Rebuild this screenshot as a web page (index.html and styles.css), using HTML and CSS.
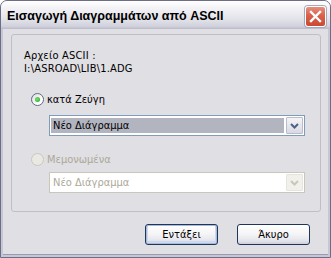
FILE: index.html
```html
<!DOCTYPE html>
<html>

<head>
    <meta charset="utf-8">
    <title>Εισαγωγή Διαγραμμάτων από ASCII</title>
    <link rel="stylesheet" href="styles.css">
</head>

<body>
    <div class="window">
        <div class="titlebar">
            <span class="title">Εισαγωγή Διαγραμμάτων από ASCII</span>
            <span class="close">
                <svg width="13" height="13" viewBox="0 0 13 13">
                    <path d="M2 2 L11 11 M11 2 L2 11" stroke="#fff" stroke-width="2.4" stroke-linecap="square" />
                </svg>
            </span>
        </div>

        <div class="client">
            <div class="group">
                <div class="label">Αρχείο ASCII :</div>
                <div class="label">I:\ASROAD\LIB\1.ADG</div>

                <div class="radio">
                    <span class="circle checked"></span>
                    <span>κατά Ζεύγη</span>
                </div>
                <div class="combo">
                    <span class="value selected">Νέο Διάγραμμα</span>
                    <span class="arrow">
                        <svg width="9" height="6" viewBox="0 0 9 6">
                            <path d="M1 1 L4.5 4.5 L8 1" fill="none" stroke="#4d6185" stroke-width="2" />
                        </svg>
                    </span>
                </div>

                <div class="radio disabled">
                    <span class="circle"></span>
                    <span>Μεμονωμένα</span>
                </div>
                <div class="combo disabled">
                    <span class="value">Νέο Διάγραμμα</span>
                    <span class="arrow">
                        <svg width="9" height="6" viewBox="0 0 9 6">
                            <path d="M1 1 L4.5 4.5 L8 1" fill="none" stroke="#c9c7ba" stroke-width="2" />
                        </svg>
                    </span>
                </div>
            </div>

            <div class="buttons">
                <div class="btn default">Εντάξει</div>
                <div class="btn">Άκυρο</div>
            </div>
        </div>
    </div>
</body>

</html>
```

FILE: styles.css
```css
body {
    margin: 0;
    font-family: "DejaVu Sans Condensed", "DejaVu Sans", sans-serif;
    font-size: 11px;
    color: #000;
    background: #fff;
}

.window {
    width: 331px;
    height: 258px;
    box-sizing: border-box;
    display: flex;
    flex-direction: column;
    border: 1px solid #6d6d86;
    border-radius: 7px 7px 0 0;
    background: #c6c6d4;
    overflow: hidden;
}

.titlebar {
    height: 28px;
    flex: none;
    display: flex;
    align-items: center;
    padding: 0 4px 0 6px;
    background: linear-gradient(#ffffff 0%, #f1f1f5 30%, #e2e2ea 65%, #d2d2dd 90%, #b9b9c9 100%);
}

.title {
    flex: 1;
    font-family: "Liberation Sans", sans-serif;
    font-weight: bold;
    font-size: 12.5px;
    color: #000;
    padding-top: 2px;
}

.close {
    width: 19px;
    height: 19px;
    display: flex;
    justify-content: center;
    align-items: center;
    border: 1px solid #fff;
    border-radius: 3px;
    background: linear-gradient(#e58f7f 0%, #d9604a 45%, #c94a35 100%);
    box-shadow: 0 0 0 1px #a8a8bb;
    margin-top: 2px;
}

.client {
    flex: 1;
    display: flex;
    flex-direction: column;
    margin: 0 2px 2px 2px;
    border-bottom: 1px solid #9a9ab0;
    background: #e0dfe3;
    padding: 5px 7px 0 8px;
}

.group {
    height: 178px;
    box-sizing: border-box;
    border: 1px solid #c0bfc8;
    border-radius: 3px;
    padding: 14px 12px 0 12px;
    display: flex;
    flex-direction: column;
}

.label {
    line-height: 13px;
    letter-spacing: 0.2px;
}

.radio {
    display: flex;
    align-items: center;
    gap: 3px;
    margin: 17px 0 0 7px;
    height: 14px;
}

.radio.disabled {
    color: #aca899;
    margin-top: 16px;
}

.circle {
    width: 11px;
    height: 11px;
    border: 1px solid #5c6b88;
    border-radius: 50%;
    background: linear-gradient(135deg, #dcdcdc, #fff 70%);
    display: flex;
    justify-content: center;
    align-items: center;
}

.circle.checked:after {
    content: "";
    width: 5px;
    height: 5px;
    border-radius: 50%;
    background: radial-gradient(circle at 40% 40%, #7be06b, #21a121);
}

.radio.disabled .circle {
    border-color: #cac8bb;
    background: #e9e8e3;
}

.combo {
    width: 256px;
    height: 21px;
    box-sizing: border-box;
    margin: 9px 0 0 25px;
    display: flex;
    border: 1px solid #7f9db9;
    background: #fff;
    padding: 1px;
}

.combo.disabled {
    border-color: #c9c7ba;
    margin-top: 6px;
    color: #aca899;
}

.value {
    flex: 1;
    display: flex;
    align-items: center;
    padding-left: 2px;
}

.value.selected {
    background: #b2b4bf;
    margin: 1px 2px 1px 0;
}

.arrow {
    width: 15px;
    display: flex;
    justify-content: center;
    align-items: center;
    border: 1px solid #b9bccc;
    border-radius: 1px;
    background: linear-gradient(#f4f4f8, #d8d9e3);
}

.combo.disabled .arrow {
    border-color: #e5e4dd;
    background: #f1f0ea;
}

.buttons {
    display: flex;
    justify-content: flex-end;
    gap: 19px;
    padding: 12px 11px 0 0;
}

.btn {
    width: 73px;
    height: 21px;
    box-sizing: border-box;
    display: flex;
    justify-content: center;
    align-items: center;
    border: 1px solid #1e3659;
    border-radius: 3px;
    background: linear-gradient(#ffffff 0%, #f4f4f6 50%, #e2e2ea 85%, #cdcdd9 100%);
}

.btn.default {
    box-shadow: inset 0 0 0 1px #a9bbdc, inset 0 -1px 0 2px #cfd9ee;
}
```
